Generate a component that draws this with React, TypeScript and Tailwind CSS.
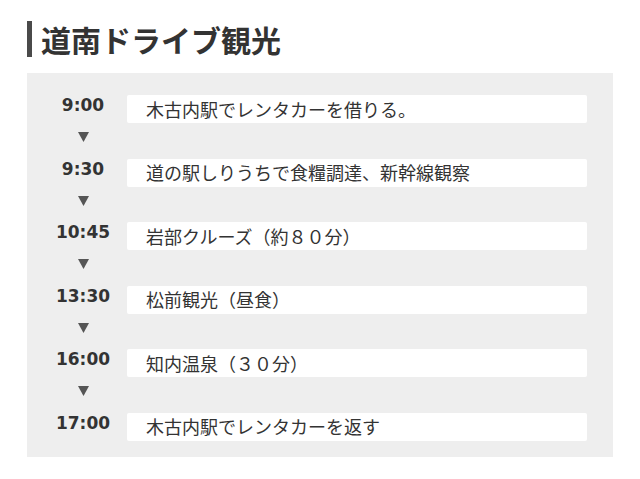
import React from "react";

const items = [
  { t: "9:00", d: "木古内駅でレンタカーを借りる。" },
  { t: "9:30", d: "道の駅しりうちで食糧調達、新幹線観察" },
  { t: "10:45", d: "岩部クルーズ（約８０分）" },
  { t: "13:30", d: "松前観光（昼食）" },
  { t: "16:00", d: "知内温泉（３０分）" },
  { t: "17:00", d: "木古内駅でレンタカーを返す" },
];

const jp = { fontFamily: '"Noto Sans CJK JP", "Noto Sans", sans-serif' };
const num = { fontFamily: '"DejaVu Sans", sans-serif' };

export default function App() {
  return (
    <div className="w-[640px] h-[479px] bg-white text-[#333]" style={jp}>
      <div className="pt-[21px] pl-[27px] flex items-center">
        <div className="w-[5px] h-[36px] bg-[#4a4a4a]" />
        <h1 className="ml-[9px] text-[30px] leading-[36px] font-bold text-[#333]">道南ドライブ観光</h1>
      </div>
      <div className="mt-[16px] ml-[27px] w-[586px] h-[384px] bg-[#eeeeee] pt-[22px] pl-[12px] pr-[26px]">
        {items.map((it, i) => (
          <div key={i}>
            <div className="flex items-start">
              <div className="w-[88px] text-center text-[17px] leading-[20px] font-bold text-[#333]" style={num}>
                {it.t}
              </div>
              <div className="flex-1 h-[28px] bg-white rounded-[2px] flex items-center pl-[19px] text-[18px] text-[#333]">
                {it.d}
              </div>
            </div>
            {i < items.length - 1 && (
              <div className="h-[35.6px] w-[88px] flex justify-center pt-[9px]">
                <svg width="11" height="10" viewBox="0 0 11 10">
                  <polygon points="0,0 11,0 5.5,10" fill="#555" />
                </svg>
              </div>
            )}
          </div>
        ))}
      </div>
    </div>
  );
}
